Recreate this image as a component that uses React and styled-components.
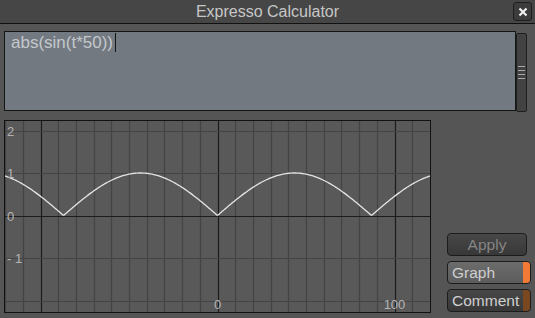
import React from 'react'
import styled, { createGlobalStyle } from 'styled-components'

const GlobalStyle = createGlobalStyle`
  html, body {
    margin: 0;
    padding: 0;
    background: #555555;
  }
  body {
    font-family: 'Liberation Sans', Arial, sans-serif;
  }
`

const Window = styled.div`
  width: 535px;
  height: 318px;
  background: #555555;
  display: flex;
  flex-direction: column;
  overflow: hidden;
`

const TitleBar = styled.div`
  height: 23px;
  background: #464646;
  border-bottom: 1px solid #111;
  display: flex;
  align-items: center;
  justify-content: center;
  position: relative;
  color: #c6c6c6;
  font-size: 16px;
`

const CloseButton = styled.div`
  position: absolute;
  right: 3px;
  top: 2px;
  width: 17px;
  height: 17px;
  border: 1px solid #1e1e1e;
  border-radius: 3px;
  background: #3c3c3c;
  display: flex;
  align-items: center;
  justify-content: center;
`

const Body = styled.div`
  flex: 1;
  display: flex;
  flex-direction: column;
  padding: 7px 8px 0 4px;
`

const EditorRow = styled.div`
  display: flex;
  align-items: flex-start;
`

const Editor = styled.div`
  width: 512px;
  height: 80px;
  box-sizing: border-box;
  border: 1px solid #151515;
  background: #737980;
  color: #c4c8cc;
  font-size: 17px;
  line-height: 19px;
  padding: 1px 6px;
`

const Caret = styled.span`
  display: inline-block;
  width: 1px;
  height: 19px;
  background: #151515;
  vertical-align: top;
  margin-left: 2px;
`

const ScrollBar = styled.div`
  margin-top: 2px;
  width: 9px;
  height: 77px;
  border: 1px solid #1e1e1e;
  border-radius: 2px;
  background: #424242;
  display: flex;
  flex-direction: column;
  align-items: center;
  justify-content: center;
  gap: 3px;
`

const Grip = styled.div`
  width: 7px;
  height: 1px;
  background: #a8a8a8;
`

const GraphRow = styled.div`
  margin-top: 8px;
  display: flex;
  align-items: flex-end;
  gap: 16px;
`

const GraphBox = styled.div`
  width: 425px;
  height: 191px;
  border: 1px solid #121212;
  background: #595959;
  svg {
    display: block;
  }
`

const ButtonColumn = styled.div`
  display: flex;
  flex-direction: column;
  gap: 5px;
  margin-bottom: 1px;
`

const Button = styled.div`
  width: 78px;
  height: 21px;
  border: 1px solid #1c1c1c;
  border-radius: 4px;
  background: ${({ $on }) => $on
    ? 'linear-gradient(#6c6c6c, #5c5c5c)'
    : 'linear-gradient(#474747, #383838)'};
  color: ${({ $disabled }) => $disabled ? '#858585' : '#cfcfcf'};
  font-size: 15.5px;
  display: flex;
  align-items: center;
  justify-content: ${({ $center }) => $center ? 'center' : 'space-between'};
  padding-left: ${({ $center }) => $center ? '0' : '4px'};
  box-sizing: content-box;
  overflow: hidden;
`

const Indicator = styled.div`
  width: 7px;
  align-self: stretch;
  background: ${({ color }) => color};
  border-radius: 0 3px 3px 0;
`

const W = 425
const H = 191
const X0 = 212.5
const PX_PER_T = 1.77
const Y0 = 94.5
const PX_PER_V = 42.5
const PERIOD = 87

const Graph = () => {
  const vLines = []
  for (let t = -120; t <= 130; t += 10) {
    const x = Math.round(X0 + t * PX_PER_T) + 0.5
    if (x < 0 || x > W) continue
    const major = t % 100 === 0
    vLines.push(
      <line key={'v' + t} x1={x} x2={x} y1={0} y2={H}
        stroke={major ? '#1c1c1c' : '#444444'} strokeWidth="1.2" />
    )
  }
  const hLines = [-2, -1, 0, 1, 2].map(v => {
    const y = Math.round(Y0 - v * PX_PER_V) + 0.5
    return (
      <line key={'h' + v} x1={0} x2={W} y1={y} y2={y}
        stroke={v === 0 ? '#1c1c1c' : '#444444'} strokeWidth="1.2" />
    )
  })
  let d = ''
  for (let x = 0; x <= W; x += 1) {
    const t = (x - X0) / PX_PER_T
    const v = Math.abs(Math.sin(Math.PI * t / PERIOD))
    const y = Y0 - v * PX_PER_V
    d += (x === 0 ? 'M' : 'L') + x + ' ' + y.toFixed(2) + ' '
  }
  const labelStyle = { fontFamily: "'Liberation Sans', Arial, sans-serif", fontSize: 13 }
  return (
    <svg width={W} height={H}>
      {vLines}
      {hLines}
      <path d={d} fill="none" stroke="#e4e4e4" strokeWidth="1.3" />
      <g fill="#b4b4b4" style={labelStyle}>
        <text x="2" y={Y0 - 2 * PX_PER_V + 5}>2</text>
        <text x="2" y={Y0 - PX_PER_V + 5}>1</text>
        <text x="2" y={Y0 + 5}>0</text>
        <text x="2" y={Y0 + PX_PER_V + 5}>- 1</text>
        <text x={X0} y="188" textAnchor="middle">0</text>
        <text x={X0 + 100 * PX_PER_T} y="188" textAnchor="middle">100</text>
      </g>
    </svg>
  )
}

const App = () => (
  <Window>
    <GlobalStyle />
    <TitleBar>
      Expresso Calculator
      <CloseButton>
        <svg width="12" height="12" viewBox="0 0 12 12">
          <path d="M2.5 2.5 L9.5 9.5 M9.5 2.5 L2.5 9.5" stroke="#f0f0f0" strokeWidth="2.2" />
        </svg>
      </CloseButton>
    </TitleBar>
    <Body>
      <EditorRow>
        <Editor>
          abs(sin(t*50))<Caret />
        </Editor>
        <ScrollBar>
          <Grip />
          <Grip />
          <Grip />
          <Grip />
        </ScrollBar>
      </EditorRow>
      <GraphRow>
        <GraphBox>
          <Graph />
        </GraphBox>
        <ButtonColumn>
          <Button $center $disabled>Apply</Button>
          <Button $on>Graph<Indicator color="#f27a34" /></Button>
          <Button>Comment<Indicator color="#7a4820" /></Button>
        </ButtonColumn>
      </GraphRow>
    </Body>
  </Window>
)

export default App
